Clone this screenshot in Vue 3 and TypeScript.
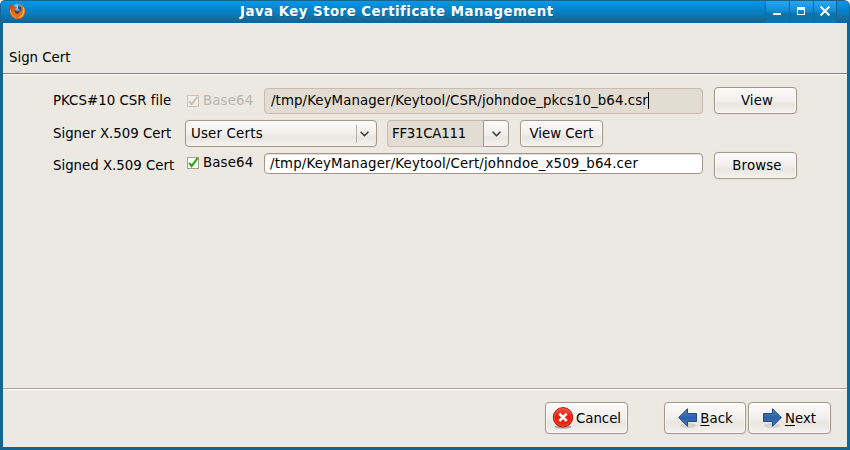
<script setup lang="ts">
import { ref } from 'vue'

const csrPath = ref<string>('/tmp/KeyManager/Keytool/CSR/johndoe_pkcs10_b64.csr')
const certPath = ref<string>('/tmp/KeyManager/Keytool/Cert/johndoe_x509_b64.cer')
const store = ref<string>('User Certs')
const alias = ref<string>('FF31CA111')
</script>

<template>
  <div class="window">
    <header class="titlebar">
      <svg class="logo" width="17" height="17" viewBox="0 0 17 17">
        <defs>
          <radialGradient id="globe" cx=".4" cy=".25" r=".8">
            <stop offset="0" stop-color="#9adcf5" />
            <stop offset=".5" stop-color="#3a86c8" />
            <stop offset="1" stop-color="#153c78" />
          </radialGradient>
          <linearGradient id="fox" x1="0" y1="0" x2="1" y2="1">
            <stop offset="0" stop-color="#a8451c" />
            <stop offset=".5" stop-color="#ef7418" />
            <stop offset="1" stop-color="#d65a10" />
          </linearGradient>
        </defs>
        <circle cx="8.8" cy="7.8" r="7" fill="url(#globe)" />
        <path d="M1 .8 2.7 2.6 4.5 2.4 6.2 3.6 8.2 4.6 6.6 6.3 5.6 8.2 7 10.2 9 10.4 11.3 9 12.2 6.5 11.4 3.4 9.8 1.2 13 2 15.5 5 16.4 9 14.8 13.4 11 16.1 6.5 16 2.7 13.6.8 9.8.7 5.5Z" fill="url(#fox)" />
        <path d="M14.2 3.5c1.9 3.1 1.7 6.5-.4 9.2-1.5 1.7-3.3 2.4-5.2 2.2 3.5-1.4 5.5-3.8 5.6-7.2Z" fill="#ffc83c" />
        <path d="M5.4 6.8 8.4 8.4 10.8 7.6 9.4 10.8 6.4 10.4Z" fill="#6b2c1c" />
        <path d="M9.6 2.6 12 4.2 12.6 8.4 11.2 7.2 9 5.2Z" fill="#1d4684" />
        <path d="M1.2 6.5c.3 3.8 2.3 6.6 5.8 7.6" fill="none" stroke="#f79a35" stroke-width="1" />
      </svg>
      <h1 class="title">Java Key Store Certificate Management</h1>
      <div class="controls">
        <button class="ctl" aria-label="Minimize">
          <svg width="23" height="22"><path d="M7 12h8v2H7z" fill="#fff" /></svg>
        </button>
        <button class="ctl" aria-label="Maximize">
          <svg width="23" height="22"><path fill-rule="evenodd" d="M7 6h8v8H7zM8 9v4h6V9z" fill="#fff" /></svg>
        </button>
        <button class="ctl ctl-close" aria-label="Close">
          <svg width="22" height="22"><path d="m7.3 6.3 7.4 7.4m0-7.4-7.4 7.4" stroke="#eef5ff" stroke-width="2.1" stroke-linecap="square" /></svg>
        </button>
      </div>
    </header>

    <div class="heading"><span class="heading-text">Sign Cert</span></div>

    <main class="form">
      <div class="row row-csr">
        <span class="label label-csr">PKCS#10 CSR file</span>
        <label class="check disabled">
          <svg class="box" width="12" height="12" viewBox="0 0 12 12">
            <rect x=".5" y=".5" width="11" height="11" fill="#f1eee9" stroke="#cdc3b6" />
            <path d="M2.2 6.2 4.6 9.4 10.3 1.7" fill="none" stroke="#c7bdb0" stroke-width="1.8" />
          </svg>
          <span class="b64">Base64</span>
        </label>
        <div class="entry readonly"><span class="path">{{ csrPath }}</span><i class="caret"></i></div>
        <button class="btn side"><span>View</span></button>
      </div>
      <div class="row row-signer">
        <span class="label label-signer">Signer X.509 Cert</span>
        <div class="combo">
          <span class="user">{{ store }}</span>
          <span class="combo-arrow">
            <svg width="9" height="6" viewBox="0 0 9 6"><path d="M.6.8 4.5 4.7 8.4.8" fill="none" stroke="#333" stroke-width="1.5" /></svg>
          </span>
        </div>
        <div class="combo-entry">
          <div class="alias">{{ alias }}</div>
          <button class="drop" aria-label="Choose alias">
            <svg width="9" height="6" viewBox="0 0 9 6"><path d="M.6.8 4.5 4.7 8.4.8" fill="none" stroke="#333" stroke-width="1.5" /></svg>
          </button>
        </div>
        <button class="btn">View Cert</button>
      </div>
      <div class="row row-signed">
        <span class="label label-signed">Signed X.509 Cert</span>
        <label class="check">
          <svg class="box" width="12" height="12" viewBox="0 0 12 12">
            <rect x=".5" y=".5" width="11" height="11" fill="#fff" stroke="#a89c8f" />
            <path d="M2.2 5.8 4.6 9.2 10.6 1.2" fill="none" stroke="#2ba50c" stroke-width="2.1" />
          </svg>
          <span class="b64">Base64</span>
        </label>
        <div class="entry editable"><span class="path">{{ certPath }}</span></div>
        <button class="btn side"><span>Browse</span></button>
      </div>
    </main>

    <footer class="actions">
      <button class="btn tall cancel">
        <svg width="22" height="22" viewBox="0 0 22 22">
          <defs>
            <linearGradient id="red" x1="0" y1="0" x2="0" y2="1">
              <stop offset="0" stop-color="#f5513d" />
              <stop offset=".5" stop-color="#e61b0c" />
              <stop offset="1" stop-color="#ef2a12" />
            </linearGradient>
          </defs>
          <ellipse cx="11" cy="19.8" rx="8.5" ry="2" fill="#000" opacity=".28" />
          <circle cx="11" cy="10.3" r="9.7" fill="url(#red)" stroke="#b50f08" />
          <circle cx="11" cy="10.3" r="8.6" fill="none" stroke="#f57564" stroke-width=".8" opacity=".6" />
          <path d="m7.3 6.6 7.4 7.4m0-7.4L7.3 14" stroke="#fff" stroke-width="2.6" />
        </svg>
        <span class="caption">Cancel</span>
      </button>
      <button class="btn tall back">
        <svg width="22" height="22" viewBox="0 0 22 22">
          <defs>
            <linearGradient id="blue" x1="0" y1="0" x2="0" y2="1">
              <stop offset="0" stop-color="#5a88c2" />
              <stop offset=".5" stop-color="#2c61a7" />
              <stop offset="1" stop-color="#4479b9" />
            </linearGradient>
          </defs>
          <ellipse cx="11" cy="18.6" rx="8" ry="2.6" fill="#000" opacity=".1" />
          <path d="M1.7 10.5 10.5 1.7V6.5H19.5V14.5H10.5V19.3Z" fill="url(#blue)" stroke="#204a87" />
        </svg>
        <span class="caption"><u>B</u>ack</span>
      </button>
      <button class="btn tall next">
        <svg width="22" height="22" viewBox="0 0 22 22">
          <ellipse cx="11" cy="18.6" rx="8" ry="2.6" fill="#000" opacity=".1" />
          <path d="M20.3 10.5 11.5 1.7V6.5H2.5V14.5H11.5V19.3Z" fill="url(#blue)" stroke="#204a87" />
        </svg>
        <span class="caption"><u>N</u>ext</span>
      </button>
    </footer>
  </div>
</template>

<style>
body {
  background: #fff;
}
</style>

<style scoped>
.window {
  box-sizing: border-box;
  width: 850px;
  height: 450px;
  padding: 1px 3px 3px;
  display: flex;
  flex-direction: column;
  background: #136593;
  border-radius: 5px 6px 0 0;
  overflow: hidden;
  font-family: "DejaVu Sans", sans-serif;
  font-size: 13.33px;
  line-height: 16px;
  color: #000;
  white-space: nowrap;
}
.titlebar {
  height: 22px;
  flex: none;
  display: flex;
  align-items: flex-start;
  margin: 0 -2px;
  padding: 0 2px;
  background: linear-gradient(#0297e9, #087fc5 50%, #136390);
  border-radius: 4px 5px 0 0;
}
.logo {
  margin: 2px 0 0 6px;
}
.title {
  flex: 1;
  margin: 2px 0 0 214px;
  font-size: 13.33px;
  line-height: 17px;
  letter-spacing: 0.48px;
  font-weight: bold;
  color: #fff;
  text-shadow: 1px 1px 0 rgba(0, 50, 90, 0.25);
}
.controls {
  display: flex;
  margin-right: 10px;
  background: #136594;
  padding: 0 1px;
  gap: 1px;
}
.ctl {
  width: 23px;
  height: 22px;
  padding: 0;
  border: 0;
  background: linear-gradient(#2ba6f5, #138bd2 45%, #0873b0 60%, #0875b4);
}
.ctl-close {
  width: 22px;
}
.ctl svg {
  display: block;
}
.heading {
  height: 50px;
  box-sizing: content-box;
  flex: none;
  padding-left: 6px;
  display: flex;
  align-items: flex-end;
  background: #ece9e2;
  border-bottom: 1px solid #83807c;
}
.heading-text {
  margin-bottom: 7px;
}
.form {
  flex: 1;
  padding: 12px 0 0 50px;
  background: #ece9e2;
  border-top: 1px solid #faf9f7;
  border-bottom: 1px solid #aca197;
}
.row {
  display: flex;
  height: 27px;
  align-items: center;
  margin-bottom: 6px;
}
.row-signer {
  margin-bottom: 5px;
}
.label {
  flex: none;
  width: 134px;
}
.label-csr {
  letter-spacing: 0.03px;
}
.label-signer {
  width: 132px;
}
.check {
  width: 77px;
  display: flex;
  align-items: center;
  gap: 4px;
}
.b64 {
  letter-spacing: 0.15px;
}
.disabled {
  color: #b8b5b0;
}
.box {
  flex: none;
}
.row-signed .check {
  margin-top: -5px;
}
.entry {
  box-sizing: border-box;
  width: 439px;
  margin-right: 11px;
  border: 1px solid #a39688;
  border-radius: 4px;
  background: #fff;
  display: flex;
  align-items: center;
}
.readonly {
  height: 26px;
  margin-top: 1px;
  padding-left: 6px;
  background: #e3dcd3;
  border-color: #c8bcae;
}
.readonly .path {
  margin-top: -1px;
  letter-spacing: 0.1px;
}
.editable {
  height: 21px;
  margin-top: -4px;
  padding-left: 5px;
  box-shadow: inset 0 1px 0 #e3dfdb;
}
.editable .path {
  letter-spacing: 0.16px;
}
.caret {
  width: 1px;
  height: 17px;
  margin-top: -1px;
  background: #000;
}
.btn {
  box-sizing: border-box;
  flex: none;
  width: 83px;
  height: 27px;
  padding: 0;
  border: 1px solid #a4978b;
  border-radius: 4px;
  background: linear-gradient(#fcfbfa, #f2f0ee 50%, #e9e6e1 65%, #f4f2ef);
  box-shadow: inset 0 0 0 1px rgba(255, 255, 255, 0.6), 0 0 1px #c9c2ba;
  color: #000;
  font: inherit;
}
.side {
  padding-left: 3px;
  letter-spacing: 0.15px;
}
.btn u {
  text-underline-offset: 2px;
  text-decoration-thickness: 1px;
  text-decoration-skip-ink: none;
}
.combo {
  box-sizing: border-box;
  width: 192px;
  height: 27px;
  margin-right: 10px;
  padding: 0 3px 0 5px;
  display: flex;
  align-items: center;
  justify-content: space-between;
  border: 1px solid #a4978b;
  border-radius: 4px;
  background: linear-gradient(#fcfbfa, #f2f0ee 50%, #e9e6e1 65%, #f4f2ef);
  box-shadow: 0 0 1px #c9c2ba;
}
.user {
  letter-spacing: 0.2px;
}
.combo-arrow {
  width: 17px;
  height: 18px;
  padding-left: 3px;
  box-sizing: border-box;
  display: flex;
  align-items: center;
  border-left: 1px solid #b8aea4;
}
.combo-entry {
  display: flex;
  margin-right: 11px;
}
.alias {
  box-sizing: border-box;
  width: 96px;
  height: 27px;
  padding: 5px 0 0 4px;
  border: 1px solid #c8bcae;
  border-right: 0;
  border-radius: 4px 0 0 4px;
  background: #e3dcd3;
  letter-spacing: -0.25px;
}
.drop {
  box-sizing: border-box;
  width: 26px;
  height: 27px;
  padding: 0;
  display: flex;
  align-items: center;
  justify-content: center;
  border: 1px solid #a4978b;
  border-radius: 0 4px 4px 0;
  background: linear-gradient(#fcfbfa, #f2f0ee 50%, #e9e6e1 65%, #f4f2ef);
}
.actions {
  height: 58px;
  flex: none;
  box-sizing: border-box;
  display: flex;
  padding: 12px 16px 0 0;
  justify-content: flex-end;
  background: #ece9e2;
  border-top: 1px solid #fff;
}
.tall {
  height: 32px;
  display: flex;
  align-items: center;
  justify-content: center;
  gap: 2px;
}
.caption {
  padding-top: 1px;
}
.cancel {
  margin-right: 36px;
}
.back {
  width: 82px;
  margin-right: 2px;
  gap: 1px;
}
.next {
  padding-right: 2px;
}
</style>
